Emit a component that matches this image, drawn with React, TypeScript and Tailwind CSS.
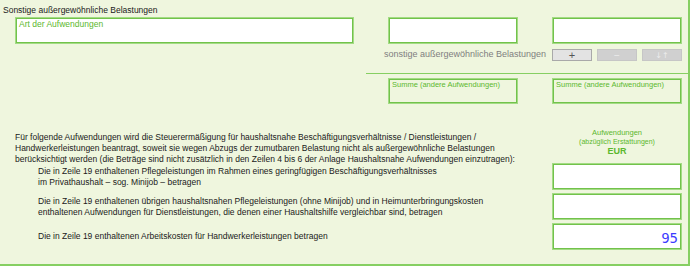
const fieldBox =
  'bg-white border border-[#a3db84] shadow-[inset_0_0_0_1px_#72c24b]';
const sumBox =
  'border border-[#a3db84] shadow-[inset_0_0_0_1px_#72c24b]';
const labelText = 'text-[7.5px] leading-[9px] text-[#5cb82e] px-[3px] pt-[1px] whitespace-nowrap';

const App = () => {
  return (
    <div className="w-[690px] h-[273px] bg-white" style={{ fontFamily: '"Liberation Sans", Arial, sans-serif' }}>
      <div className="w-[690px] h-[266px] bg-[#eff6de] border-r-2 border-b-2 border-[#86cf62] flex flex-col text-[#1a1a1a]">
        {/* Sonstige Belastungen */}
        <div className="pl-[3px] pt-[4px] text-[8.5px] leading-[12px] whitespace-nowrap">
          Sonstige außergewöhnliche Belastungen
        </div>
        <div className="flex mt-[1px] h-[27px]">
          <div className={`${fieldBox} ml-[15px] w-[339px]`}>
            <div className="text-[8.5px] leading-[10px] text-[#5cb82e] px-[3px] pt-[1px] whitespace-nowrap">Art der Aufwendungen</div>
          </div>
          <div className={`${fieldBox} ml-[34px] w-[130px]`} />
          <div className={`${fieldBox} ml-[34px] w-[130px]`} />
        </div>
        <div className="flex items-center justify-end mt-[5px] pr-[6px] h-[12px]">
          <span className="text-[9px] text-[#808080] mr-[6px] whitespace-nowrap">
            sonstige außergewöhnliche Belastungen
          </span>
          <div className="flex gap-[5px]">
            <button className="w-[40px] h-[12px] bg-[#e3e3e3] border border-[#a9a9a9] text-[11px] leading-[9px] text-[#555] flex items-center justify-center">
              +
            </button>
            <button className="w-[40px] h-[12px] bg-[#d0d0d0] border border-[#c6c6c6] text-[10px] leading-[9px] text-[#ececec] flex items-center justify-center">
              −
            </button>
            <button
              className="w-[40px] h-[12px] bg-[#d0d0d0] border border-[#c6c6c6] text-[8px] leading-[9px] text-[#ececec] flex items-center justify-center"
              style={{ fontFamily: '"DejaVu Sans", sans-serif' }}
            >
              ↓↑
            </button>
          </div>
        </div>
        <div className="ml-[366px] mt-[12px] h-px bg-[#86cf62]" />
        <div className="flex mt-[4px] h-[26px]">
          <div className={`${sumBox} ml-[388px] w-[130px]`}>
            <div className={labelText}>Summe (andere Aufwendungen)</div>
          </div>
          <div className={`${sumBox} ml-[34px] w-[130px]`}>
            <div className={labelText}>Summe (andere Aufwendungen)</div>
          </div>
        </div>

        {/* Haushaltsnahe Aufwendungen */}
        <div className="flex mt-[24px]">
          <p className="ml-[15px] w-[537px] text-[8.5px] leading-[11px] whitespace-nowrap pt-[4px]">
            Für folgende Aufwendungen wird die Steuerermäßigung für haushaltsnahe Beschäftigungsverhältnisse / Dienstleistungen /
            <br />
            Handwerkerleistungen beantragt, soweit sie wegen Abzugs der zumutbaren Belastung nicht als außergewöhnliche Belastungen
            <br />
            berücksichtigt werden (die Beträge sind nicht zusätzlich in den Zeilen 4 bis 6 der Anlage Haushaltsnahe Aufwendungen einzutragen):
          </p>
          <div className="w-[130px] flex flex-col items-center text-[#5cb82e] pt-[1px]">
            <span className="text-[7.5px] leading-[8px]">Aufwendungen</span>
            <span className="text-[7px] leading-[9px]">(abzüglich Erstattungen)</span>
            <span className="text-[9px] leading-[11px] font-bold">EUR</span>
          </div>
        </div>
        <div className="flex flex-col gap-[3px] mt-[-2px]">
          <div className="flex items-center">
            <p className="ml-[38px] w-[514px] text-[8.5px] leading-[11px] whitespace-nowrap pt-[1px]">
              Die in Zeile 19 enthaltenen Pflegeleistungen im Rahmen eines geringfügigen Beschäftigungsverhältnisses
              <br />
              im Privathaushalt – sog. Minijob – betragen
            </p>
            <div className={`${fieldBox} w-[130px] h-[27px]`} />
          </div>
          <div className="flex items-center">
            <p className="ml-[38px] w-[514px] text-[8.5px] leading-[11px] whitespace-nowrap">
              Die in Zeile 19 enthaltenen übrigen haushaltsnahen Pflegeleistungen (ohne Minijob) und in Heimunterbringungskosten
              <br />
              enthaltenen Aufwendungen für Dienstleistungen, die denen einer Haushaltshilfe vergleichbar sind, betragen
            </p>
            <div className={`${fieldBox} w-[130px] h-[27px]`} />
          </div>
          <div className="flex items-center">
            <p className="ml-[38px] w-[514px] text-[8.5px] leading-[11px] whitespace-nowrap">
              Die in Zeile 19 enthaltenen Arbeitskosten für Handwerkerleistungen betragen
            </p>
            <div className={`${fieldBox} w-[130px] h-[27px] flex items-center justify-end pr-[3px]`}>
              <span
                className="text-[14px] leading-[16px] text-[#3c3cff] pt-[2px]"
                style={{ fontFamily: '"DejaVu Sans Mono", monospace' }}
              >
                95
              </span>
            </div>
          </div>
        </div>
      </div>
    </div>
  );
};

export default App;
